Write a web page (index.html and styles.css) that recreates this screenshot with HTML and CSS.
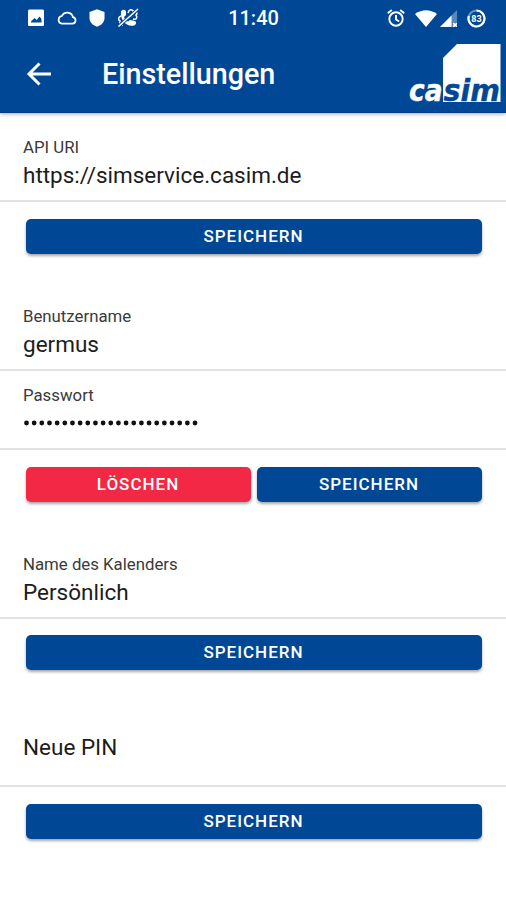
FILE: index.html
```html
<!DOCTYPE html>
<html lang="de">
<head>
<meta charset="utf-8">
<title>Einstellungen</title>
<link rel="stylesheet" href="styles.css">
</head>
<body>
<header class="header">
  <div class="status">
    <div class="status-left">
      <svg width="18" height="18" viewBox="0 0 18 18"><path fill="#fff" fill-rule="evenodd" d="M2 .5h14Q17 .5 17 2v14q0 1-1 1H2Q1 17 1 16V2Q1 .5 2 .5zM4 13.500h10.500V10l-2-2.500-2.700 3.500L7.500 9 4 12.500z"/></svg>
      <svg width="20" height="14" viewBox="0 0 20 14"><path fill="none" stroke="#fff" stroke-width="1.700" d="M5 12.700h10.500a3.300 3.300 0 0 0 .5-6.500A6 6 0 0 0 4.800 5 3.900 3.900 0 0 0 5 12.700z"/></svg>
      <svg width="16" height="18" viewBox="0 0 16 18"><path fill="#fff" d="M8 .3 15.500 3v6c0 4-3 7.300-7.500 8.700C3.500 16.300.5 13 .5 9V3z"/></svg>
      <svg width="22" height="20" viewBox="0 0 22 20"><path fill="#fff" d="M4 3.500C5 1 9 1 9 4v3L7 9c1 2 2 3.500 4 4.500l2-1.500 5 1c2 1 1 4-1 4.500C9 19 3 12 4 3.500z"/><g fill="none" stroke="#fff" stroke-width="1.500"><path d="M11 5c1-4 4-4 5-2 3-1 5 2 3 4 2 3 0 5-3 4M12 9l3-1M4 8c-3 1-3 4-1 5-1 3 1 4 3 4"/></g><path stroke="#004896" stroke-width="3.400" d="M2 18 20 2"/><path stroke="#fff" stroke-width="1.600" d="M1.500 18.500 21 1"/></svg>
    </div>
    <span class="clock">11:40</span>
    <div class="status-right">
      <svg width="18" height="18" viewBox="0 0 18 18"><g fill="none" stroke="#fff" stroke-width="1.900"><circle cx="9" cy="10" r="6.700"/><path d="M.8 4.200 4.800.9M17.200 4.200l-4-3.300M9 6v4.500l3.200 2"/></g></svg>
      <svg class="wifi" width="22" height="17" viewBox="0 0 22 17"><path fill="#fff" d="M0 4Q11-3.500 22 4L11 17z"/></svg>
      <svg class="signal" width="17" height="17" viewBox="0 0 17 17"><path fill="#fff" opacity=".35" d="M17 0v17H0z"/><path fill="#fff" d="M11.500 5.500V17H0zM13 13h1.500l.7 1 .8-1h1v1.200l-.8.800.8.800V17h-1l-.8-1-.7 1H13v-1.200l.8-.8-.8-.8z"/></svg>
      <svg class="battery" width="19" height="19" viewBox="0 0 19 19"><circle cx="9.500" cy="9.500" r="8" fill="none" stroke="#fff" stroke-opacity=".4" stroke-width="2.200"/><path fill="none" stroke="#fff" stroke-width="2.200" d="M9.500 1.500a8 8 0 1 1-7.600 5.500"/><text class="level" x="9.500" y="12.800" text-anchor="middle">83</text></svg>
    </div>
  </div>
  <div class="toolbar">
    <svg class="back" width="26" height="24" viewBox="0 0 26 24"><path fill="none" stroke="#fff" stroke-width="3" d="M13.500 1.500 3 12l10.500 10.500M3 12h22"/></svg>
    <h1 class="title">Einstellungen</h1>
    <svg class="logo" width="96" height="64" viewBox="0 0 96 64"><path fill="#fff" d="M48 2h43.500v58H34V16z"/><text class="brand brand-light" x="0" y="58.500" textLength="33.500" lengthAdjust="spacingAndGlyphs">ca</text><text class="brand brand-dark" x="34.500" y="58.500" textLength="56.500" lengthAdjust="spacingAndGlyphs">sim</text></svg>
  </div>
</header>
<main class="content">
  <div class="field"><label class="label">API URI</label><div class="value">https://simservice.casim.de</div></div>
  <div class="actions"><button class="btn">SPEICHERN</button></div>
  <div class="field"><label class="label">Benutzername</label><div class="value">germus</div></div>
  <div class="field"><label class="label">Passwort</label><div class="value"><svg class="dots" width="180" height="6"><line x1="3.500" y1="3" x2="173" y2="3"/></svg></div></div>
  <div class="actions"><button class="btn danger">LÖSCHEN</button><button class="btn">SPEICHERN</button></div>
  <div class="field"><label class="label">Name des Kalenders</label><div class="value">Persönlich</div></div>
  <div class="actions"><button class="btn">SPEICHERN</button></div>
  <div class="field single"><div class="value">Neue PIN</div></div>
  <div class="actions"><button class="btn">SPEICHERN</button></div>
</main>
</body>
</html>
```
FILE: styles.css
```css
* { box-sizing: border-box; }
body { margin: 0; background: #fff; color: #1c1c1c; font-family: Roboto, sans-serif; height: 900px; overflow: hidden; }
.header { height: 113px; background: #004896; color: #fff; border-bottom: 1px solid #003985; box-shadow: 0 1px 4px rgba(0,0,0,.35); }
svg { display: block; flex: none; }
.status { height: 35px; display: grid; grid-template-columns: 1fr auto 1fr; align-items: center; padding: 0 19px 0 27px; }
.status-left { display: flex; align-items: center; gap: 12px; }
.status-right { display: flex; align-items: center; justify-content: flex-end; transform: translateX(-1px); }
.wifi { margin-left: 10px; }
.signal { margin-left: 3px; }
.battery { margin-left: 10px; }
.clock { font-size: 20px; font-weight: 500; line-height: 36px; margin-right: 7px; }
.level { font: 700 9px Roboto, sans-serif; fill: #fff; }
.toolbar { height: 77px; display: flex; align-items: center; padding: 0 1px 0 26px; }
.title { margin: 0 0 0 50px; font-size: 28.700px; font-weight: 500; line-height: 36px; flex: 1; }
.brand { font: italic 700 31px "DejaVu Sans", sans-serif; stroke-width: .4px; }
.brand-light { fill: #fff; stroke: #fff; }
.brand-dark { fill: #004896; stroke: #004896; }
.content { padding-top: 10.400px; }
.field { height: 79px; padding: 13px 23px 0; border-bottom: 2px solid #e2e2e2; }
.label { display: block; font-size: 16.800px; line-height: 22px; color: #3a3a3a; }
.value { font-size: 22.500px; line-height: 28px; margin-top: 3px; }
.single { padding-top: 22px; }
.actions { height: 89.700px; display: flex; gap: 6px; padding: 16.600px 24.500px 0 25.500px; }
.btn { flex: 1; height: 35px; padding: 0; border: 0; border-radius: 5px; background: #004896; color: #fff; font: 500 17px/35px Roboto, sans-serif; letter-spacing: 1px; box-shadow: 0 2px 3px rgba(0,0,0,.35); }
.danger { background: #f22845; }
.dots { position: relative; top: 10.500px; }
.dots line { stroke: #111; stroke-width: 4.800; stroke-linecap: round; stroke-dasharray: 0 7.660; }
```
